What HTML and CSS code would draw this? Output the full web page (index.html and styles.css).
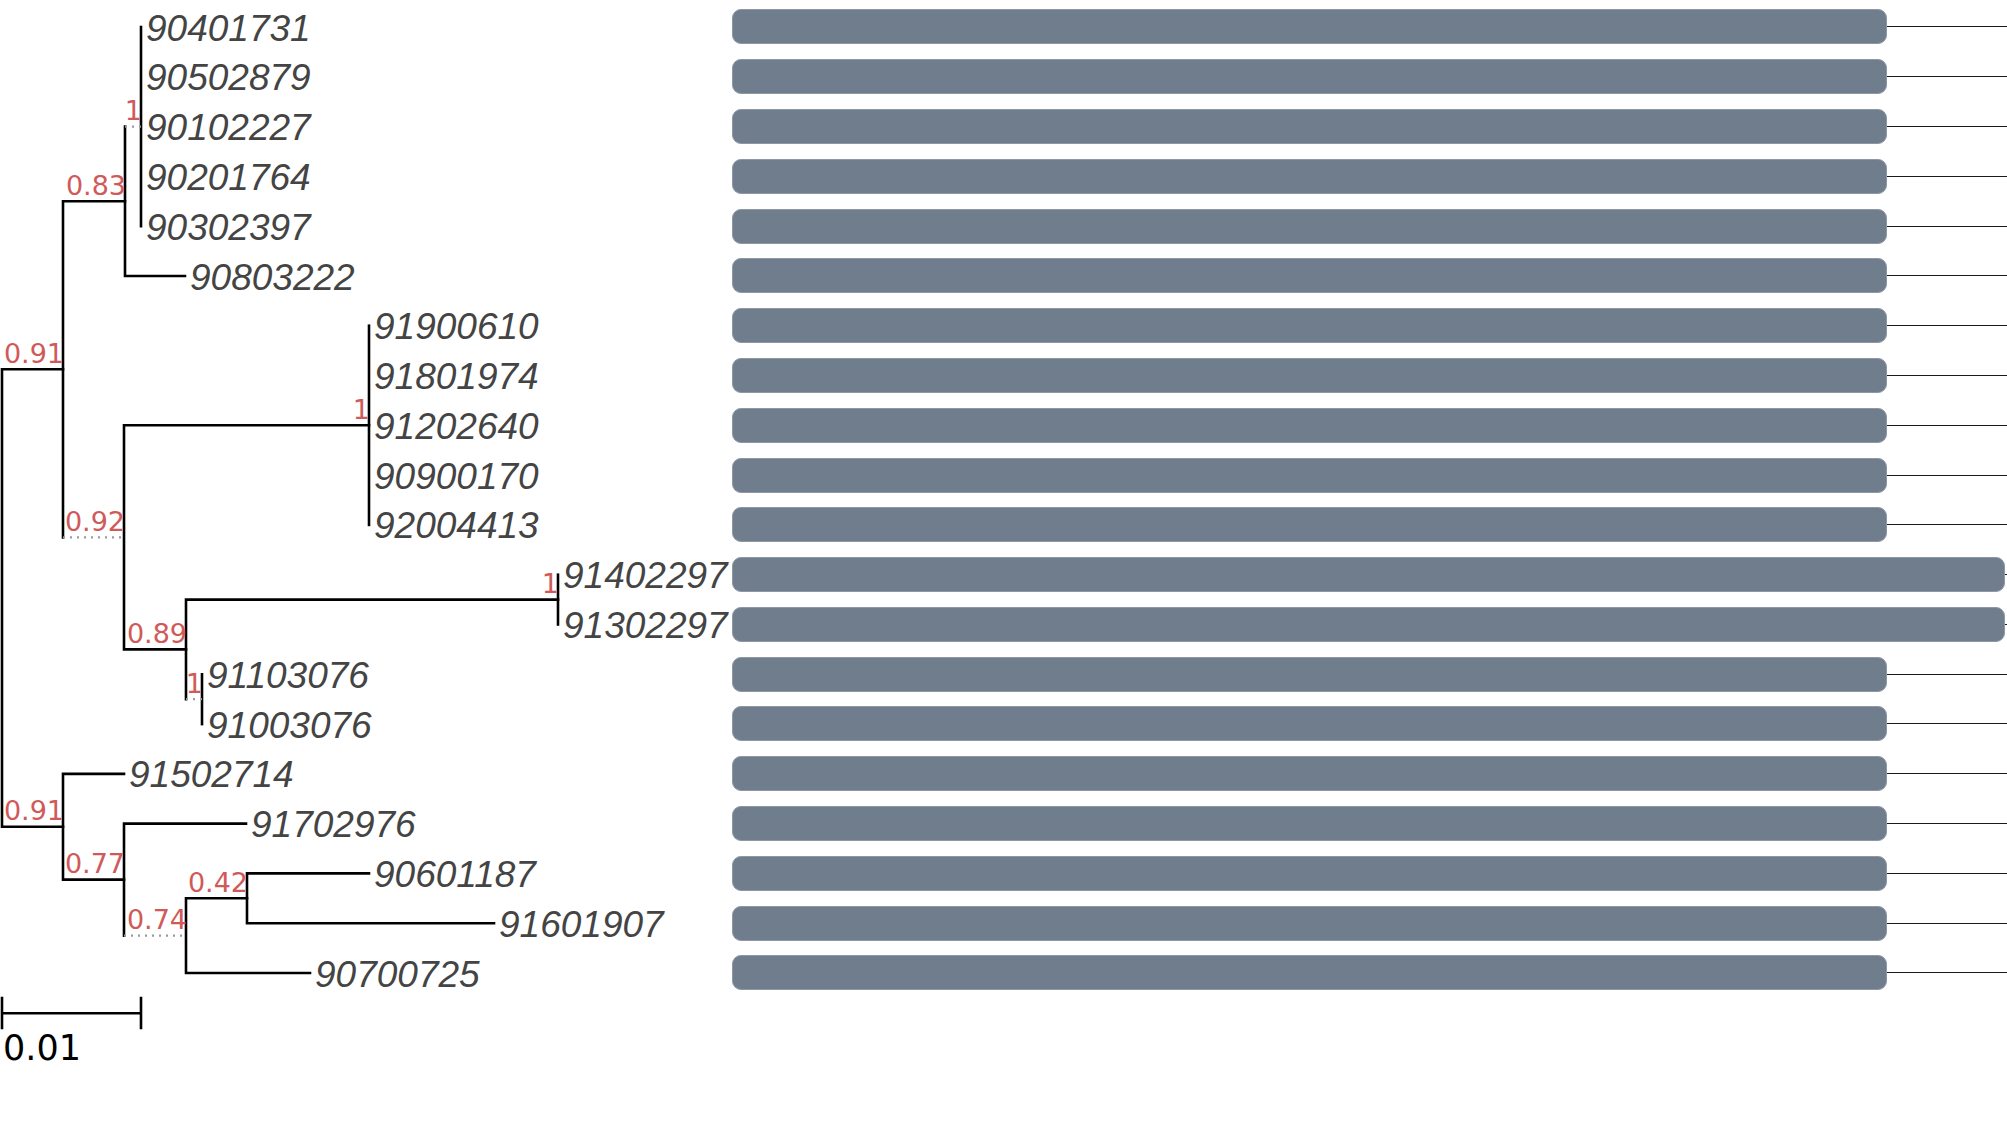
FILE: index.html
```html
<!DOCTYPE html>
<html lang="en">
<head>
<meta charset="utf-8">
<title>Phylogenetic tree</title>
<link rel="stylesheet" href="styles.css">
</head>
<body>
<div class="figure">
  <svg class="tree" width="732" height="1090" viewBox="0 0 732 1090" xmlns="http://www.w3.org/2000/svg">
    <g class="branch">
      <path d="M2 369.3V826.8M2 369.3H63M2 826.8H63"/>
      <path d="M63 201.3V537.4M63 201.3H125"/>
      <path d="M125 126.6V276M125 276H185"/>
      <path d="M141 27V226.2"/>
      <path d="M124 425.3V649.4M124 425.3H369M124 649.4H186"/>
      <path d="M369 325.7V524.9"/>
      <path d="M186 599.6V699.2M186 599.6H558"/>
      <path d="M558 574.7V624.5"/>
      <path d="M202 674.3V724.1"/>
      <path d="M63 773.9V879.6M63 773.9H124M63 879.6H124"/>
      <path d="M124 823.6V935.7M124 823.6H246"/>
      <path d="M186 898.3V973M186 898.3H247M186 973H310"/>
      <path d="M247 873.4V923.2M247 873.4H369M247 923.2H494"/>
    </g>
    <g class="dotted">
      <path d="M63 537.4H124"/>
      <path d="M125 126.6H141"/>
      <path d="M186 699.2H202"/>
      <path d="M124 935.7H186"/>
    </g>
    <g class="support">
      <text x="64" y="362.8">0.91</text>
      <text x="126" y="194.8">0.83</text>
      <text x="142" y="120.1">1</text>
      <text x="125" y="530.9">0.92</text>
      <text x="370" y="418.8">1</text>
      <text x="187" y="642.9">0.89</text>
      <text x="559" y="593.1">1</text>
      <text x="203" y="692.7">1</text>
      <text x="64" y="820.3">0.91</text>
      <text x="125" y="873.1">0.77</text>
      <text x="187" y="929.2">0.74</text>
      <text x="248" y="891.8">0.42</text>
    </g>
    <g class="tip-label">
      <text x="146" y="40.5">90401731</text>
      <text x="146" y="90.3">90502879</text>
      <text x="146" y="140.1">90102227</text>
      <text x="146" y="189.9">90201764</text>
      <text x="146" y="239.7">90302397</text>
      <text x="190" y="289.5">90803222</text>
      <text x="374" y="339.2">91900610</text>
      <text x="374" y="389">91801974</text>
      <text x="374" y="438.8">91202640</text>
      <text x="374" y="488.6">90900170</text>
      <text x="374" y="538.4">92004413</text>
      <text x="563" y="588.2">91402297</text>
      <text x="563" y="638">91302297</text>
      <text x="207" y="687.8">91103076</text>
      <text x="207" y="737.6">91003076</text>
      <text x="129" y="787.4">91502714</text>
      <text x="251" y="837.1">91702976</text>
      <text x="374" y="886.9">90601187</text>
      <text x="499" y="936.7">91601907</text>
      <text x="315" y="986.5">90700725</text>
    </g>
    <g class="scale">
      <path class="branch" d="M2 1013.3H141M2 998V1028M141 998V1028"/>
      <text class="scale-label" x="3" y="1060">0.01</text>
    </g>
  </svg>
  <div class="tracks">
    <div class="track"><div class="bar"></div><div class="tail"></div></div>
    <div class="track"><div class="bar"></div><div class="tail"></div></div>
    <div class="track"><div class="bar"></div><div class="tail"></div></div>
    <div class="track"><div class="bar"></div><div class="tail"></div></div>
    <div class="track"><div class="bar"></div><div class="tail"></div></div>
    <div class="track"><div class="bar"></div><div class="tail"></div></div>
    <div class="track"><div class="bar"></div><div class="tail"></div></div>
    <div class="track"><div class="bar"></div><div class="tail"></div></div>
    <div class="track"><div class="bar"></div><div class="tail"></div></div>
    <div class="track"><div class="bar"></div><div class="tail"></div></div>
    <div class="track"><div class="bar"></div><div class="tail"></div></div>
    <div class="track"><div class="bar bar-long"></div><div class="tail"></div></div>
    <div class="track"><div class="bar bar-long"></div><div class="tail"></div></div>
    <div class="track"><div class="bar"></div><div class="tail"></div></div>
    <div class="track"><div class="bar"></div><div class="tail"></div></div>
    <div class="track"><div class="bar"></div><div class="tail"></div></div>
    <div class="track"><div class="bar"></div><div class="tail"></div></div>
    <div class="track"><div class="bar"></div><div class="tail"></div></div>
    <div class="track"><div class="bar"></div><div class="tail"></div></div>
    <div class="track"><div class="bar"></div><div class="tail"></div></div>
  </div>
</div>
</body>
</html>
```
FILE: styles.css
```css
html, body {
  margin: 0;
  padding: 0;
  background: #ffffff;
}

body {
  width: 2007px;
  height: 1137px;
  overflow: hidden;
  font-family: "DejaVu Sans", sans-serif;
}

.figure {
  display: flex;
  align-items: flex-start;
}

.tree {
  flex: none;
  display: block;
  overflow: visible;
}

.branch {
  fill: none;
  stroke: #000000;
  stroke-width: 2.6;
  stroke-linecap: square;
}

.dotted {
  fill: none;
  stroke: #9a9a9a;
  stroke-width: 2.2;
  stroke-dasharray: 2 5;
}

.support {
  font-family: "DejaVu Sans", sans-serif;
  font-size: 27px;
  fill: #d05a5a;
  text-anchor: end;
}

.tip-label {
  font-family: "Liberation Sans", Arial, sans-serif;
  font-style: italic;
  font-size: 37px;
  fill: #444444;
}

.scale-label {
  font-family: "DejaVu Sans", sans-serif;
  font-size: 35px;
  fill: #000000;
}

.tracks {
  flex: none;
  width: 1275px;
  padding-top: 2.1px;
  display: flex;
  flex-direction: column;
}

.track {
  height: 49.79px;
  display: flex;
  align-items: center;
}

.bar {
  flex: none;
  box-sizing: border-box;
  width: 1155px;
  height: 35px;
  border-radius: 9px;
  background: #6f7d8c;
  border: 1px solid #8d98a4;
}

.bar-long {
  width: 1273px;
}

.tail {
  flex: 1;
  height: 1px;
  background: #1a1a1a;
}
```
